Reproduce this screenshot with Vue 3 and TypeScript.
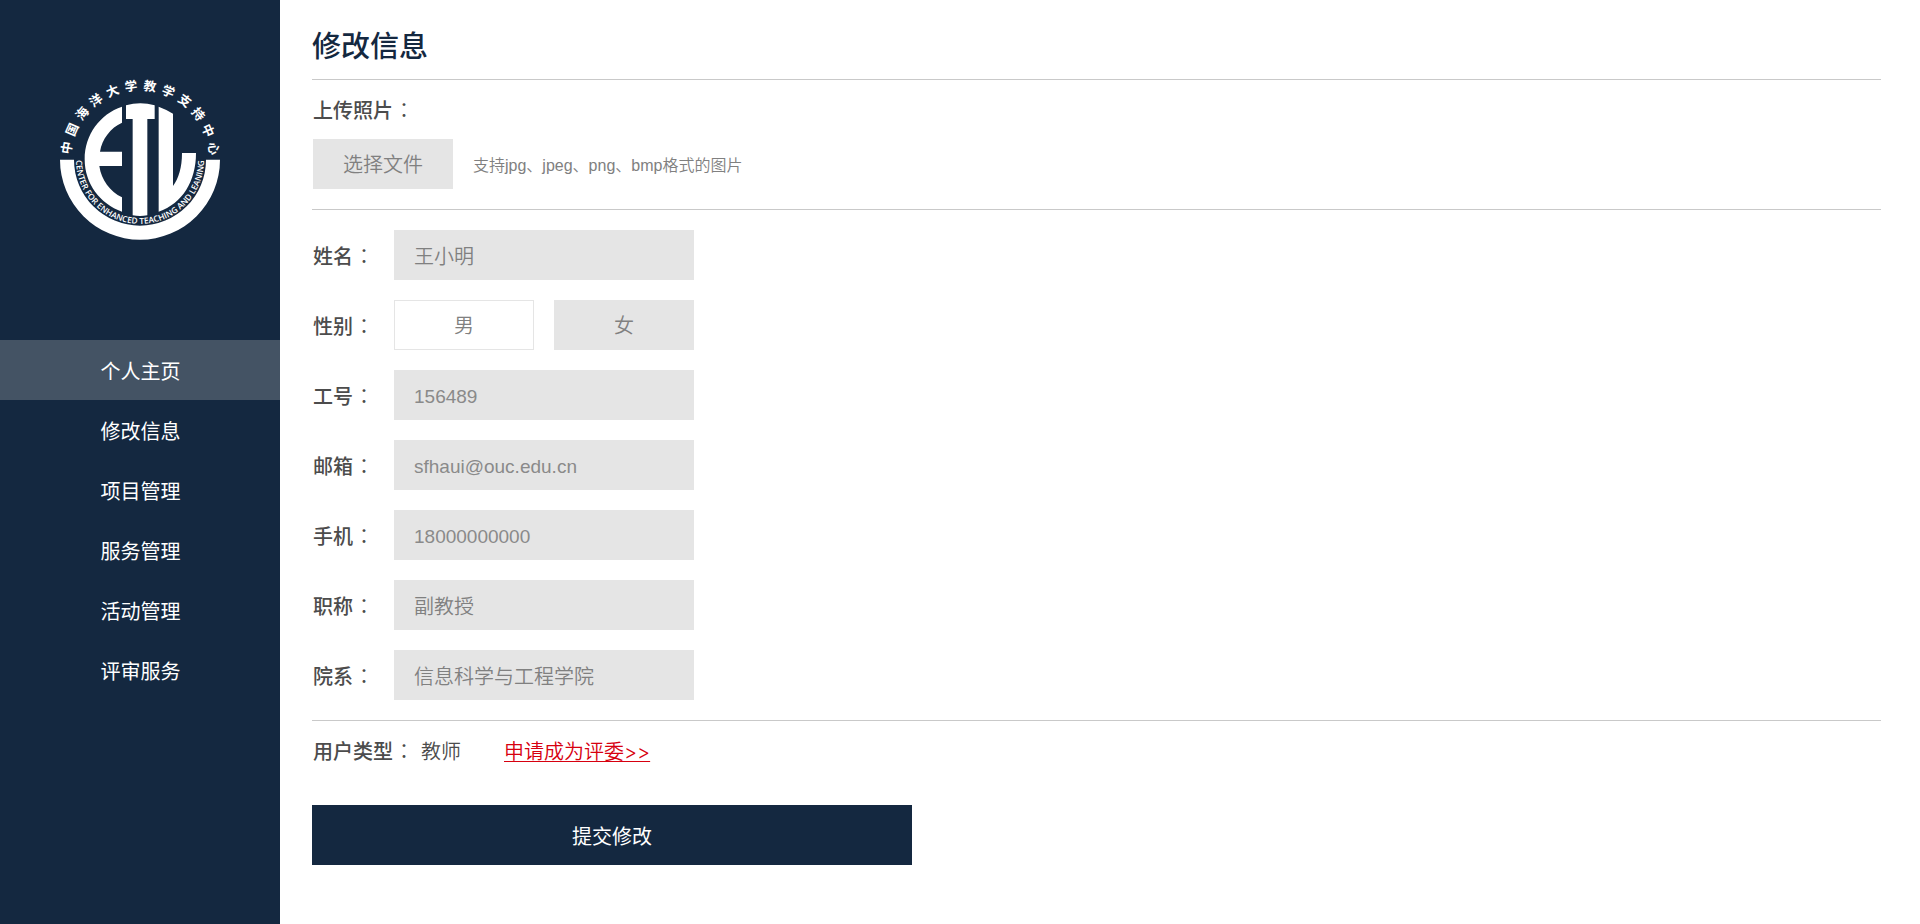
<script setup lang="ts">
import { reactive, ref } from 'vue'

interface NavItem {
  label: string
  href: string
}

interface Field {
  key: string
  label: string
  type: string
  latin?: boolean
}

const navItems: NavItem[] = [
  { label: '个人主页', href: '#home' },
  { label: '修改信息', href: '#profile' },
  { label: '项目管理', href: '#projects' },
  { label: '服务管理', href: '#services' },
  { label: '活动管理', href: '#activities' },
  { label: '评审服务', href: '#reviews' },
]
const activeItem = ref('#home')

const form = reactive<Record<string, string>>({
  name: '王小明',
  gender: '男',
  staffNo: '156489',
  email: 'sfhaui@ouc.edu.cn',
  phone: '18000000000',
  title: '副教授',
  school: '信息科学与工程学院',
})

const fields: Field[] = [
  { key: 'staffNo', label: '工号', type: 'text', latin: true },
  { key: 'email', label: '邮箱', type: 'email', latin: true },
  { key: 'phone', label: '手机', type: 'tel', latin: true },
  { key: 'title', label: '职称', type: 'text' },
  { key: 'school', label: '院系', type: 'text' },
]

const genders = ['男', '女']

const sealChars = Array.from('中国海洋大学教学支持中心')
const sealAngle = (i: number): number => -80.5 + i * 14.7
</script>

<template>
  <div class="page">
    <aside class="sidebar">
      <svg class="logo" viewBox="0 0 540 540" role="img" aria-label="中国海洋大学教学支持中心">
        <defs>
          <path id="seal-arc" d="M79 250 A192 192 0 1 0 461 250" />
        </defs>
        <g fill="#fff">
          <path d="M30 269 H72 A198 198 0 0 0 468 269 H510 A240 240 0 0 1 30 269 Z" />
          <path
            d="M216 110 V158 C182 173 156 207 150 245 H216 V288 H148 C154 330 180 365 216 382 V425 C150 402 104 341 104 268 C104 194 150 132 216 110 Z"
          />
          <path d="M228 106 Q271 94 314 106 V147 H292 V436 Q270 440 248 436 V147 H228 Z" />
          <path
            d="M326 110 Q348 118 369 131 V348 C386 326 396 292 396 249 H438 C438 333 398 400 326 425 Z"
          />
          <text
            v-for="(char, i) in sealChars"
            :key="i"
            class="seal-char"
            x="270"
            y="61"
            text-anchor="middle"
            :transform="`rotate(${sealAngle(i)} 270 270)`"
          >{{ char }}</text>
          <text class="seal-latin" text-anchor="middle">
            <textPath href="#seal-arc" startOffset="50%">CENTER FOR ENHANCED TEACHING AND LEANING</textPath>
          </text>
        </g>
      </svg>
      <nav class="nav">
        <a
          v-for="item in navItems"
          :key="item.href"
          :href="item.href"
          class="nav-link"
          :class="{ active: item.href === activeItem }"
          @click="activeItem = item.href"
        >{{ item.label }}</a>
      </nav>
    </aside>

    <main class="content">
      <h1 class="heading">修改信息</h1>
      <form @submit.prevent>
        <section class="section upload">
          <label class="label" for="photo">上传照片<span class="colon">：</span></label>
          <div class="upload-row">
            <label class="choice">
              <input id="photo" class="native" type="file" accept=".jpg,.jpeg,.png,.bmp" />选择文件
            </label>
            <span class="hint">支持jpg、jpeg、png、bmp格式的图片</span>
          </div>
        </section>

        <section class="section fields">
          <div class="row">
            <label class="label" for="name">姓名<span class="colon">：</span></label>
            <input id="name" v-model="form.name" class="input" type="text" />
          </div>
          <div class="row" role="radiogroup" aria-labelledby="gender-label">
            <span id="gender-label" class="label">性别<span class="colon">：</span></span>
            <div class="choices">
              <label
                v-for="gender in genders"
                :key="gender"
                class="choice"
                :class="{ selected: form.gender === gender }"
              >
                <input v-model="form.gender" class="native" type="radio" name="gender" :value="gender" />{{ gender }}
              </label>
            </div>
          </div>
          <div v-for="field in fields" :key="field.key" class="row">
            <label class="label" :for="field.key">{{ field.label }}<span class="colon">：</span></label>
            <input
              :id="field.key"
              v-model="form[field.key]"
              class="input"
              :class="{ latin: field.latin }"
              :type="field.type"
            />
          </div>
        </section>

        <section class="section user-type">
          <span class="label">用户类型<span class="colon">：</span></span>
          <span class="role">教师</span>
          <a class="apply" href="#apply">申请成为评委<span class="arrows">&gt;&gt;</span></a>
        </section>

        <button class="submit" type="submit">提交修改</button>
      </form>
    </main>
  </div>
</template>

<style>
body {
  margin: 0;
  background: #fff;
}
</style>

<style scoped>
.page {
  display: flex;
  min-height: 100vh;
  font-family: "Noto Sans CJK SC", sans-serif;
  font-size: 20px;
  line-height: 30px;
  color: #4c4c4c;
}

.sidebar {
  flex: none;
  display: flex;
  flex-direction: column;
  align-items: center;
  width: 280px;
  padding-top: 70px;
  box-sizing: border-box;
  background: #142840;
}

.logo {
  width: 180px;
  height: 180px;
  margin-bottom: 90px;
}

.seal-char {
  font-size: 38px;
  font-weight: 700;
}

.seal-latin {
  font-family: "Open Sans", sans-serif;
  font-size: 25px;
  font-weight: 600;
}

.nav {
  align-self: stretch;
}

.nav-link {
  display: block;
  height: 60px;
  padding-left: 1px;
  line-height: 62px;
  text-align: center;
  text-decoration: none;
  color: #fff;
}

.nav-link.active {
  background: #445364;
}

.content {
  flex: 1;
  padding: 0 39px 0 32px;
}

.heading {
  margin: 0;
  padding: 24px 0 15px;
  font-size: 29px;
  font-weight: 500;
  line-height: 40px;
  color: #142840;
}

.section {
  border-top: 1px solid #c9c9c9;
}

.upload {
  padding: 15px 0 20px 1px;
}

.label {
  font-weight: 500;
}

.row > .label {
  padding-top: 2px;
}

.colon {
  padding-left: 1px;
  font-family: "Noto Sans CJK TC", sans-serif;
  font-weight: 350;
}

.upload-row {
  display: flex;
  align-items: center;
  gap: 20px;
  margin-top: 14px;
}

.choice {
  width: 140px;
  height: 50px;
  box-sizing: border-box;
  border: 1px solid #e5e5e5;
  background: #e5e5e5;
  font-weight: 350;
  line-height: 48px;
  text-align: center;
  color: #808080;
  cursor: pointer;
}

.choice.selected {
  background: #fff;
}

.native {
  position: absolute;
  width: 1px;
  height: 1px;
  margin: 0;
  opacity: 0;
}

.hint {
  padding-top: 4px;
  font-family: "Liberation Sans", "Noto Sans CJK SC", sans-serif;
  font-size: 16px;
  font-weight: 350;
  color: #808080;
}

.fields {
  display: grid;
  gap: 20px;
  padding: 20px 0 20px 1px;
}

.row {
  display: grid;
  grid-template-columns: 81px 300px;
  align-items: center;
}

.choices {
  display: flex;
  justify-content: space-between;
}

.input {
  width: 100%;
  height: 50px;
  box-sizing: border-box;
  padding: 0 20px;
  border: 0;
  border-radius: 0;
  background: #e5e5e5;
  font-family: inherit;
  font-size: 20px;
  font-weight: 350;
  color: #808080;
}

.input.latin {
  padding-top: 4px;
  font-family: "Liberation Sans", sans-serif;
  font-size: 19px;
  color: #8a8a8a;
}

.user-type {
  display: flex;
  padding: 15px 0 39px 1px;
}

.role {
  margin: 0 43px 0 7px;
  font-weight: 350;
}

.apply {
  height: 30px;
  color: #d7000f;
  font-weight: 350;
  text-decoration-thickness: 1px;
  text-underline-offset: 2px;
}

.arrows {
  font-family: Inter, sans-serif;
  font-weight: 300;
  line-height: 1;
}

.submit {
  display: block;
  width: 600px;
  max-width: 100%;
  height: 60px;
  padding: 0;
  border: 0;
  background: #142840;
  font-family: inherit;
  font-size: 20px;
  color: #fff;
  cursor: pointer;
}
</style>
